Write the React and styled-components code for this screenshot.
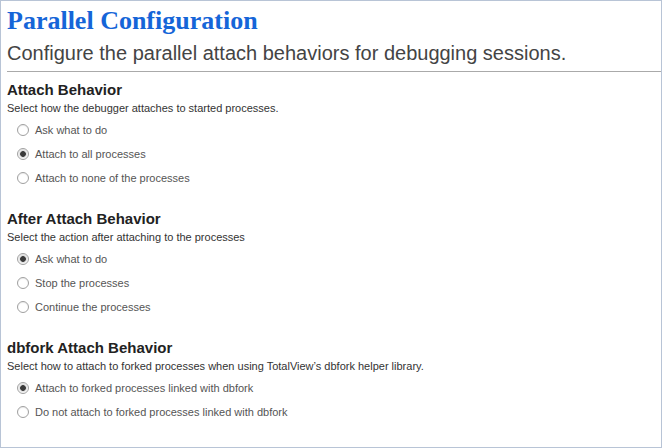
import React from 'react'
import styled, { createGlobalStyle } from 'styled-components'

const Global = createGlobalStyle`
  html, body { margin: 0; padding: 0; background: #fff; }
  body { font-family: "Liberation Sans", Arial, sans-serif; }
`

const Page = styled.div`
  box-sizing: border-box;
  width: 662px;
  height: 448px;
  border: 1px solid #b8c4d6;
  padding: 0 0 0 6px;
  overflow: hidden;
`

const Title = styled.h1`
  margin: 0;
  padding-top: 5px;
  font-family: "Liberation Serif", "Times New Roman", serif;
  font-weight: bold;
  font-size: 26px;
  line-height: 30px;
  color: #1565d8;
`

const Subtitle = styled.div`
  margin-top: 3px;
  font-size: 20px;
  line-height: 28px;
  color: #444;
  padding-bottom: 4px;
  border-bottom: 1px solid #aaa;
`

const Section = styled.section`
  padding-top: ${p => p.first ? '7px' : '18px'};
`

const Heading = styled.h2`
  margin: 0;
  font-size: 15px;
  line-height: 21px;
  font-weight: bold;
  color: #222;
`

const Desc = styled.div`
  font-size: 11px;
  line-height: 16px;
  color: #333;
`

const Options = styled.div`
  display: flex;
  flex-direction: column;
  padding-left: 10px;
  padding-top: 2px;
`

const Option = styled.label`
  display: flex;
  align-items: center;
  gap: 6px;
  height: 24px;
  font-size: 11px;
  color: #555;
`

const Radio = styled.span`
  box-sizing: border-box;
  width: 12px;
  height: 12px;
  border-radius: 50%;
  border: 1px solid #a0a0a0;
  background: ${p => p.checked ? 'radial-gradient(circle, #3a3a3a 0, #3a3a3a 2.5px, #dcdcdc 3.2px, #fff 5px)' : '#fff'};
  box-shadow: inset 0 1px 1px rgba(0,0,0,0.08);
  flex: none;
`

const sections = [
  {
    title: 'Attach Behavior',
    desc: 'Select how the debugger attaches to started processes.',
    options: ['Ask what to do', 'Attach to all processes', 'Attach to none of the processes'],
    checked: 1
  },
  {
    title: 'After Attach Behavior',
    desc: 'Select the action after attaching to the processes',
    options: ['Ask what to do', 'Stop the processes', 'Continue the processes'],
    checked: 0
  },
  {
    title: 'dbfork Attach Behavior',
    desc: 'Select how to attach to forked processes when using TotalView\u2019s dbfork helper library.',
    options: ['Attach to forked processes linked with dbfork', 'Do not attach to forked processes linked with dbfork'],
    checked: 0
  }
]

export default function App () {
  return (
    <>
      <Global />
      <Page>
        <Title>Parallel Configuration</Title>
        <Subtitle>Configure the parallel attach behaviors for debugging sessions.</Subtitle>
        {sections.map((s, i) => (
          <Section key={s.title} first={i === 0}>
            <Heading>{s.title}</Heading>
            <Desc>{s.desc}</Desc>
            <Options>
              {s.options.map((o, j) => (
                <Option key={o}>
                  <Radio checked={j === s.checked} />
                  {o}
                </Option>
              ))}
            </Options>
          </Section>
        ))}
      </Page>
    </>
  )
}
